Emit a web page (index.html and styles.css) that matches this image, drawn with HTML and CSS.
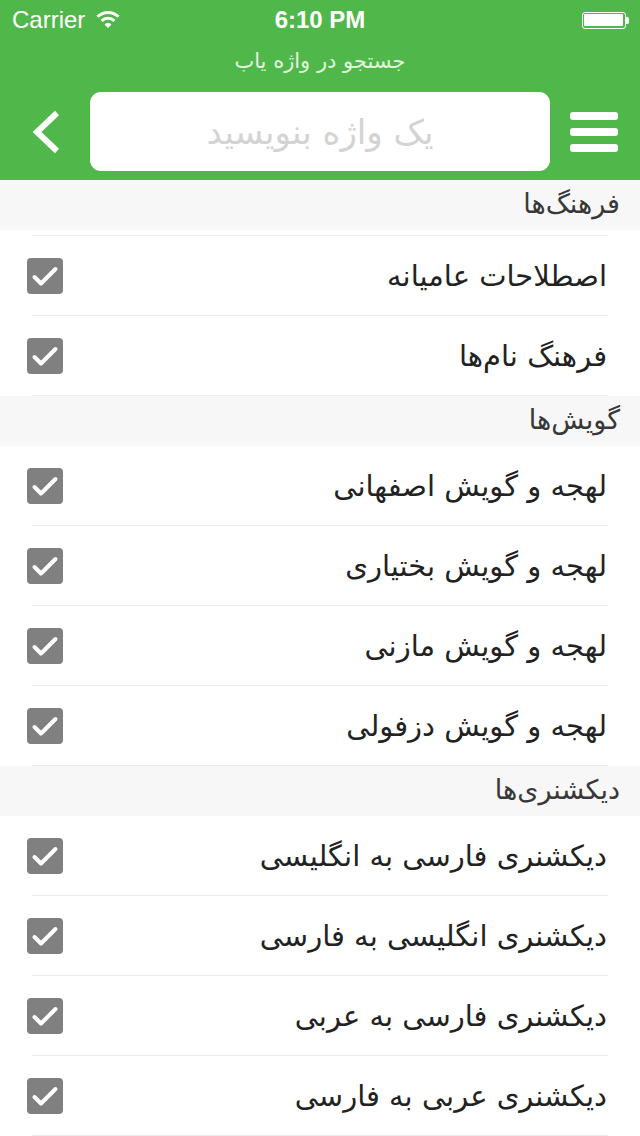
FILE: index.html
```html
<!DOCTYPE html>
<html lang="fa">
<head>
<meta charset="utf-8">
<title>واژه یاب</title>
<link rel="stylesheet" href="styles.css">
</head>
<body>
<div class="app">
  <header class="nav">
    <div class="status">
      <div class="status-left">
        <span class="carrier">Carrier</span>
        <svg class="wifi" width="24" height="18" viewBox="0 0 24 18">
          <path d="M1.5 6.8 A15 15 0 0 1 22.5 6.8" fill="none" stroke="#fff" stroke-width="3"/>
          <path d="M5.6 10.9 A9.2 9.2 0 0 1 18.4 10.9" fill="none" stroke="#fff" stroke-width="3"/>
          <path d="M12 18 L8.6 14.4 A4.8 4.8 0 0 1 15.4 14.4 Z" fill="#fff"/>
        </svg>
      </div>
      <span class="time">6:10 PM</span>
      <div class="battery"><div class="battery-body"><div class="battery-fill"></div></div><div class="battery-nub"></div></div>
    </div>
    <div class="title">جستجو در واژه یاب</div>
    <div class="searchrow">
      <svg class="back" width="28" height="44" viewBox="0 0 28 44">
        <path d="M25 3 L5 22 L25 41" fill="none" stroke="#fff" stroke-width="6" stroke-linejoin="miter"/>
      </svg>
      <div class="searchbox"><span class="placeholder">یک واژه بنویسید</span></div>
      <div class="menu"><span class="bar"></span><span class="bar"></span><span class="bar"></span></div>
    </div>
  </header>

  <main class="list">
    <section class="section">
      <div class="sec-head">فرهنگ&zwnj;ها</div>
      <ul class="rows first">
        <li class="row"><span class="check"><svg width="36" height="36" viewBox="0 0 36 36"><rect width="36" height="36" rx="4" fill="#808080"/><path d="M7.5 19 L14 25.5 L28.5 11" fill="none" stroke="#fff" stroke-width="4" stroke-linecap="round" stroke-linejoin="round"/></svg></span><span class="label">اصطلاحات عامیانه</span></li>
        <li class="row"><span class="check"><svg width="36" height="36" viewBox="0 0 36 36"><rect width="36" height="36" rx="4" fill="#808080"/><path d="M7.5 19 L14 25.5 L28.5 11" fill="none" stroke="#fff" stroke-width="4" stroke-linecap="round" stroke-linejoin="round"/></svg></span><span class="label">فرهنگ نام&zwnj;ها</span></li>
      </ul>
    </section>
    <section class="section">
      <div class="sec-head">گویش&zwnj;ها</div>
      <ul class="rows">
        <li class="row"><span class="check"><svg width="36" height="36" viewBox="0 0 36 36"><rect width="36" height="36" rx="4" fill="#808080"/><path d="M7.5 19 L14 25.5 L28.5 11" fill="none" stroke="#fff" stroke-width="4" stroke-linecap="round" stroke-linejoin="round"/></svg></span><span class="label">لهجه و گویش اصفهانی</span></li>
        <li class="row"><span class="check"><svg width="36" height="36" viewBox="0 0 36 36"><rect width="36" height="36" rx="4" fill="#808080"/><path d="M7.5 19 L14 25.5 L28.5 11" fill="none" stroke="#fff" stroke-width="4" stroke-linecap="round" stroke-linejoin="round"/></svg></span><span class="label">لهجه و گویش بختیاری</span></li>
        <li class="row"><span class="check"><svg width="36" height="36" viewBox="0 0 36 36"><rect width="36" height="36" rx="4" fill="#808080"/><path d="M7.5 19 L14 25.5 L28.5 11" fill="none" stroke="#fff" stroke-width="4" stroke-linecap="round" stroke-linejoin="round"/></svg></span><span class="label">لهجه و گویش مازنی</span></li>
        <li class="row"><span class="check"><svg width="36" height="36" viewBox="0 0 36 36"><rect width="36" height="36" rx="4" fill="#808080"/><path d="M7.5 19 L14 25.5 L28.5 11" fill="none" stroke="#fff" stroke-width="4" stroke-linecap="round" stroke-linejoin="round"/></svg></span><span class="label">لهجه و گویش دزفولی</span></li>
      </ul>
    </section>
    <section class="section">
      <div class="sec-head">دیکشنری&zwnj;ها</div>
      <ul class="rows">
        <li class="row"><span class="check"><svg width="36" height="36" viewBox="0 0 36 36"><rect width="36" height="36" rx="4" fill="#808080"/><path d="M7.5 19 L14 25.5 L28.5 11" fill="none" stroke="#fff" stroke-width="4" stroke-linecap="round" stroke-linejoin="round"/></svg></span><span class="label">دیکشنری فارسی به انگلیسی</span></li>
        <li class="row"><span class="check"><svg width="36" height="36" viewBox="0 0 36 36"><rect width="36" height="36" rx="4" fill="#808080"/><path d="M7.5 19 L14 25.5 L28.5 11" fill="none" stroke="#fff" stroke-width="4" stroke-linecap="round" stroke-linejoin="round"/></svg></span><span class="label">دیکشنری انگلیسی به فارسی</span></li>
        <li class="row"><span class="check"><svg width="36" height="36" viewBox="0 0 36 36"><rect width="36" height="36" rx="4" fill="#808080"/><path d="M7.5 19 L14 25.5 L28.5 11" fill="none" stroke="#fff" stroke-width="4" stroke-linecap="round" stroke-linejoin="round"/></svg></span><span class="label">دیکشنری فارسی به عربی</span></li>
        <li class="row"><span class="check"><svg width="36" height="36" viewBox="0 0 36 36"><rect width="36" height="36" rx="4" fill="#808080"/><path d="M7.5 19 L14 25.5 L28.5 11" fill="none" stroke="#fff" stroke-width="4" stroke-linecap="round" stroke-linejoin="round"/></svg></span><span class="label">دیکشنری عربی به فارسی</span></li>
      </ul>
    </section>
  </main>
</div>
</body>
</html>
```
FILE: styles.css
```css
* { box-sizing: border-box; }
html, body { margin: 0; padding: 0; background: #fff; }
body {
  width: 640px;
  height: 1136px;
  overflow: hidden;
  font-family: "DejaVu Sans", "Noto Sans", sans-serif;
}
.app { width: 640px; }

.nav {
  background: #50b84a;
  padding-bottom: 9px;
}
.status {
  height: 40px;
  display: flex;
  align-items: center;
  justify-content: space-between;
  padding: 0 12px 0 12px;
  color: #fff;
  font-family: "Liberation Sans", Arial, sans-serif;
  font-size: 24px;
}
.status-left { display: flex; align-items: center; gap: 11px; width: 200px; }
.wifi { display: block; margin-top: -2px; }
.time { font-weight: bold; font-size: 24px; }
.battery { width: 200px; display: flex; justify-content: flex-end; align-items: center; }
.battery-body {
  width: 44px; height: 17px;
  border: 1.5px solid #fff;
  border-radius: 3px;
  padding: 1.5px;
}
.battery-fill { width: 100%; height: 100%; background: #fff; border-radius: 1px; }
.battery-nub { width: 3px; height: 7px; background: #fff; border-radius: 0 2px 2px 0; margin-right: -1px; }

.title {
  height: 42px;
  line-height: 42px;
  text-align: center;
  color: #e4f3e0;
  font-size: 21px;
  direction: rtl;
}

.searchrow {
  margin-top: 10px;
  display: flex;
  align-items: center;
  padding-left: 32px;
  height: 79px;
}
.back { display: block; flex: none; }
.searchbox {
  margin-left: 30px;
  width: 460px;
  height: 79px;
  background: #fff;
  border-radius: 11px;
  display: flex;
  align-items: center;
  justify-content: center;
  direction: rtl;
}
.placeholder { color: #d3d3d3; font-size: 34px; }
.menu {
  margin-left: 20px;
  width: 48px;
  display: flex;
  flex-direction: column;
  gap: 8px;
}
.bar { display: block; height: 8px; background: #fff; border-radius: 3px; }

.list { background: #fff; }
.sec-head {
  height: 50px;
  background: #f7f7f7;
  direction: rtl;
  padding-right: 20px;
  font-size: 27px;
  line-height: 48px;
  color: #383838;
}
.rows { list-style: none; margin: 0; padding: 0; }
.rows.first { margin-top: 5px; border-top: 1px solid #efefef; margin-left: 32px; margin-right: 32px; }
.rows.first .row { margin: 0; }
.row {
  height: 80px;
  margin: 0 32px;
  border-bottom: 1px solid #ebebeb;
  display: flex;
  align-items: center;
  justify-content: space-between;
}
.check { display: block; margin-left: -5px; width: 36px; height: 36px; }
.check svg { display: block; }
.label {
  direction: rtl;
  font-size: 29px;
  color: #222;
  padding-right: 1px;
}
```
